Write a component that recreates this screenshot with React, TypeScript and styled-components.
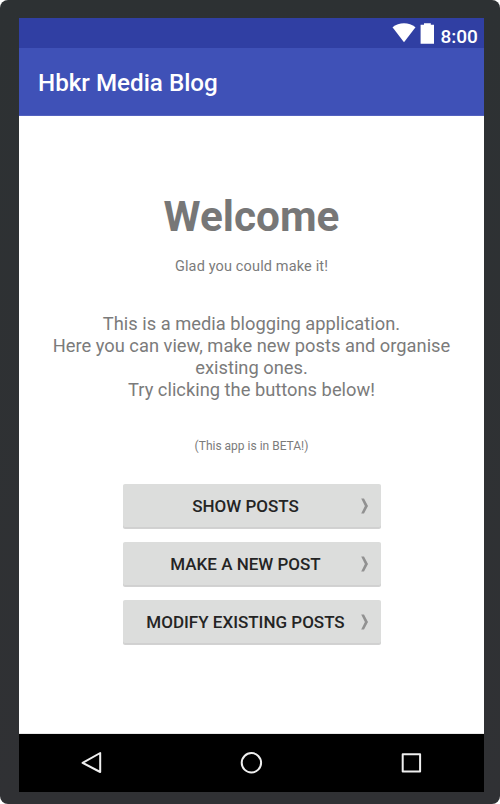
import React from 'react';
import styled, { createGlobalStyle } from 'styled-components';

const GlobalStyle = createGlobalStyle`
  html, body { margin: 0; padding: 0; background: #fff; }
  body { font-family: Roboto, "Liberation Sans", sans-serif; overflow: hidden; }
  * { box-sizing: border-box; }
`;

const Device = styled.div`
  width: 500px;
  height: 804px;
  padding: 18px 16px 12px 19px;
  border-radius: 8px;
  background: linear-gradient(#2d3133, #303134);
`;

const Screen = styled.div`
  height: 774px;
  display: flex;
  flex-direction: column;
  background: #fff;
`;

const StatusBar = styled.div`
  height: 30px;
  display: flex;
  justify-content: flex-end;
  background: #303fa3;
`;

const Clock = styled.span`
  width: 37px;
  margin: 8px 6.5px 0 7px;
  font-size: 19px;
  font-weight: 500;
  line-height: 22px;
  white-space: nowrap;
  color: #fff;
`;

const AppBar = styled.header`
  height: 68px;
  padding: 20px 19px 0;
  background: #3f51b7;
  border-bottom: 1px solid #5362bf;
`;

const AppTitle = styled.h1`
  margin: 0;
  font-size: 24.2px;
  font-weight: 500;
  line-height: 31px;
  color: #fff;
`;

const Content = styled.main`
  height: 618px;
  display: flex;
  flex-direction: column;
  align-items: center;
  color: #7b7b7b;
  text-align: center;
  border-bottom: 1px solid #e8e8e8;
`;

const Heading = styled.h2`
  margin: 76px 0 0;
  font-size: 42.3px;
  font-weight: 700;
  line-height: 50px;
  color: #777;
`;

const Tagline = styled.p`
  margin: 16px 0 0;
  font-size: 14.5px;
  line-height: 18px;
  letter-spacing: 0.14px;
`;

const Description = styled.p`
  margin: 37px 0 0;
  font-size: 18.3px;
  line-height: 21.9px;
  letter-spacing: 0.01px;
  white-space: nowrap;
`;

const Notice = styled.p`
  margin: 37.4px 0 0;
  font-size: 12px;
  line-height: 16px;
`;

const Actions = styled.div`
  width: 258px;
  margin: 30px 0 0;
  display: grid;
  gap: 14px;
`;

const ActionButton = styled.button`
  height: 44px;
  padding: 0 12px 0 23px;
  display: grid;
  grid-template-columns: 1fr 8px;
  column-gap: 15px;
  align-items: center;
  border: 0;
  border-radius: 2px;
  background: #dcdddc;
  box-shadow: inset 0 -1px #d0d0d0, 0 1px #d2d2d2;
  font-family: inherit;
  font-size: 17px;
  font-weight: 500;
  line-height: 20px;
  color: #242424;
  white-space: nowrap;
`;

const NavBar = styled.nav`
  height: 58px;
  display: grid;
  grid-template-columns: 145px 175px 145px;
  align-items: center;
  justify-items: center;
  background: #000;
`;

const Icon = styled.svg`
  display: block;
  flex: none;
`;

const WifiIcon = () => (
  <Icon width="24" height="30" viewBox="0 0 24 30" fill="#fff">
    <path d="M0.5 9.2C7 4 17 4 23.5 9.2L12 24.2Z" />
  </Icon>
);

const BatteryIcon = () => (
  <Icon width="18" height="30" viewBox="0 0 18 30" fill="#fff">
    <path d="M8 5.2h6.8v1.6H18v18.9H4.6V6.8H8z" />
  </Icon>
);

const Chevron = () => (
  <Icon width="8" height="16" viewBox="0 0 8 16" fill="#919191">
    <path d="M.2.5h2.8L7 8l-4 7.5H.2L3.9 8z" />
  </Icon>
);

const NavIcon = ({ children }: { children: React.ReactNode }) => (
  <Icon width="28" height="28" viewBox="0 0 28 28" fill="none" stroke="#efefef" strokeWidth="2" strokeLinejoin="round">
    {children}
  </Icon>
);

const actions = ['SHOW POSTS', 'MAKE A NEW POST', 'MODIFY EXISTING POSTS'];

export default function App() {
  return (
    <>
      <GlobalStyle />
      <Device>
        <Screen>
          <StatusBar>
            <WifiIcon />
            <BatteryIcon />
            <Clock>8:00</Clock>
          </StatusBar>
          <AppBar>
            <AppTitle>Hbkr Media Blog</AppTitle>
          </AppBar>
          <Content>
            <Heading>Welcome</Heading>
            <Tagline>Glad you could make it!</Tagline>
            <Description>
              This is a media blogging application.<br />
              Here you can view, make new posts and organise<br />
              existing ones.<br />
              Try clicking the buttons below!
            </Description>
            <Notice>(This app is in BETA!)</Notice>
            <Actions>
              {actions.map((label) => (
                <ActionButton key={label} type="button">
                  <span>{label}</span>
                  <Chevron />
                </ActionButton>
              ))}
            </Actions>
          </Content>
          <NavBar>
            <NavIcon><path d="M4.6 13.8 22.2 4v19z" /></NavIcon>
            <NavIcon><circle cx="13.4" cy="13.8" r="9.7" /></NavIcon>
            <NavIcon><rect x="4.7" y="5.2" width="17.4" height="17.4" /></NavIcon>
          </NavBar>
        </Screen>
      </Device>
    </>
  );
}
